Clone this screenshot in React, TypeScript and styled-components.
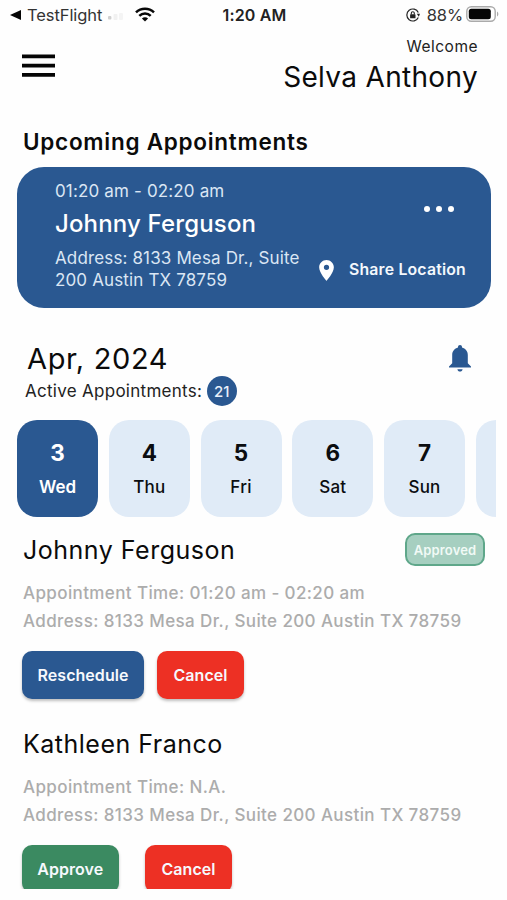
import React from "react";
import styled, { createGlobalStyle } from "styled-components";

const BLUE = "#2a5891";
const RED = "#ed3024";
const GREEN = "#3b8a61";

const GlobalStyle = createGlobalStyle`
  *, *::before, *::after { box-sizing: border-box; }
  body {
    margin: 0;
    background: #fefefe;
    color: #0b0b0b;
    font-family: Inter, Roboto, sans-serif;
  }
  button { font-family: inherit; border: 0; padding: 0; background: none; color: inherit; }
`;

interface TextProps {
  $size: number;
  $line: number;
  $weight?: number;
  $track?: number;
  $color?: string;
}

const Text = styled.div<TextProps>`
  font-size: ${(p) => p.$size}px;
  line-height: ${(p) => p.$line}px;
  font-weight: ${(p) => p.$weight ?? 400};
  letter-spacing: ${(p) => p.$track ?? 0}px;
  color: ${(p) => p.$color ?? "inherit"};
  white-space: pre;
`;

const Screen = styled.main`
  width: 507px;
  height: 900px;
  overflow: hidden;
`;

const Scroll = styled.div`
  height: 889px;
  overflow: hidden;
`;

const StatusBar = styled.div`
  display: grid;
  grid-template-columns: 1fr auto 1fr;
  align-items: center;
  height: 30px;
  padding: 0 8px 0 10px;
`;

const StatusSide = styled.div<{ $end?: boolean }>`
  display: flex;
  align-items: center;
  justify-content: ${(p) => (p.$end ? "flex-end" : "flex-start")};
`;

const BackArrow = styled.svg`
  margin-right: 6px;
`;

const Signal = styled.svg`
  margin: 4px 11px 0 5px;
`;

const WifiIcon = styled.svg`
  margin-top: -2px;
`;

const LockIcon = styled.svg`
  margin-right: 7px;
`;

const BatteryIcon = styled.svg`
  margin: -2px 0 0 3px;
`;

const Header = styled.header`
  display: flex;
  justify-content: space-between;
  height: 98px;
  padding: 7px 29px 0 22px;
`;

const MenuButton = styled.button`
  width: 33px;
  height: 23px;
  margin-top: 17px;
`;

const Greeting = styled.div`
  display: flex;
  flex-direction: column;
  align-items: flex-end;
`;

const SectionTitle = styled.h2`
  margin: 0;
  padding: 0 23px;
  height: 39px;
  font-size: 22.5px;
  line-height: 28px;
  font-weight: 600;
  letter-spacing: 0.73px;
`;

const NextCard = styled.section`
  display: flex;
  width: 474px;
  height: 141px;
  margin-left: 17px;
  padding: 12px 25px 0 38px;
  border-radius: 27px;
  background: ${BLUE};
`;

const CardInfo = styled.div`
  flex: 1;
  display: flex;
  flex-direction: column;
`;

const CardAddress = styled(Text)`
  margin-top: 3px;
`;

const CardActions = styled.div`
  display: flex;
  flex-direction: column;
  align-items: flex-end;
  justify-content: space-between;
  padding: 27px 0 27px;
`;

const MoreButton = styled.button`
  display: flex;
  gap: 5.6px;
  margin-right: 12px;
`;

const Dot = styled.span`
  width: 6.4px;
  height: 6.4px;
  border-radius: 50%;
  background: #fff;
`;

const ShareButton = styled.button`
  display: flex;
  align-items: center;
  gap: 15px;
`;

const MonthBar = styled.div`
  display: flex;
  justify-content: space-between;
  padding: 33px 36px 0 25px;
  height: 112px;
`;

const MonthTitle = styled(Text)`
  padding-left: 2px;
`;

const BellButton = styled.button`
  height: 27px;
  margin-top: 4px;
`;

const ActiveRow = styled.div`
  display: flex;
  align-items: center;
  gap: 4.5px;
`;

const CountBadge = styled.span`
  display: grid;
  place-items: center;
  width: 30px;
  height: 30px;
  border-radius: 50%;
  background: ${BLUE};
  color: #e8f0fa;
  font-size: 15px;
  font-weight: 500;
`;

const Days = styled.div`
  display: flex;
  gap: 10.75px;
  width: 479px;
  margin-left: 17px;
  overflow: hidden;
`;

const Day = styled.button<{ $active?: boolean }>`
  flex: 0 0 81px;
  height: 97px;
  display: flex;
  flex-direction: column;
  align-items: center;
  padding-top: 18px;
  gap: 7px;
  border-radius: 20px;
  background: ${(p) => (p.$active ? BLUE : "#e0ebf7")};
  color: ${(p) => (p.$active ? "#fff" : "#0b0d10")};
`;

const Appointment = styled.article`
  height: 194px;
  padding: 16px 22px 0 23px;
`;

const NameRow = styled.div`
  display: flex;
  align-items: center;
  justify-content: space-between;
  height: 34px;
  margin-bottom: 11.5px;
`;

const StatusTag = styled.span`
  display: grid;
  place-items: center;
  width: 80px;
  height: 33px;
  margin-top: -1px;
  border: 2px solid #5fa78a;
  border-radius: 10px;
  background: #a6cfc0;
  color: #f1faf6;
  font-size: 13px;
  font-weight: 600;
  letter-spacing: 0.15px;
`;

const Buttons = styled.div<{ $gap: number }>`
  display: flex;
  gap: ${(p) => p.$gap}px;
  margin: 16.5px 0 0 -1px;
`;

const ActionButton = styled.button<{ $bg: string; $width: number }>`
  width: ${(p) => p.$width}px;
  height: 48px;
  border-radius: 10px;
  background: ${(p) => p.$bg};
  color: #f6f9fd;
  font-size: 16px;
  font-weight: 600;
  letter-spacing: 0.05px;
  box-shadow: 0 2px 3px rgba(0, 0, 0, 0.25);
`;

const days = [
  ["3", "Wed"],
  ["4", "Thu"],
  ["5", "Fri"],
  ["6", "Sat"],
  ["7", "Sun"],
];

interface Action {
  label: string;
  bg: string;
  width: number;
}

interface Visit {
  name: string;
  time: string;
  approved?: boolean;
  gap: number;
  actions: Action[];
}

const visits: Visit[] = [
  {
    name: "Johnny Ferguson",
    time: "01:20 am - 02:20 am",
    approved: true,
    gap: 13,
    actions: [
      { label: "Reschedule", bg: BLUE, width: 122 },
      { label: "Cancel", bg: RED, width: 87 },
    ],
  },
  {
    name: "Kathleen Franco",
    time: "N.A.",
    gap: 26.5,
    actions: [
      { label: "Approve", bg: GREEN, width: 96.5 },
      { label: "Cancel", bg: RED, width: 87 },
    ],
  },
];

export default function App() {
  return (
    <Screen>
      <GlobalStyle />
      <Scroll>
        <StatusBar>
          <StatusSide>
            <BackArrow width="11" height="10" viewBox="0 0 11 10">
              <path d="M0 5 11 0V10Z" fill="#050505" />
            </BackArrow>
            <Text $size={16.5} $line={30} $track={-0.08} $color="#333">
              TestFlight
            </Text>
            <Signal width="17" height="8" viewBox="0 0 17 8">
              <rect x="1" y="3" width="3.4" height="3.6" rx="1" fill="#d0d0d0" />
              <rect x="6.5" y="1" width="4" height="6" rx="1" fill="#f1f1f1" />
              <rect x="12" y="0" width="4" height="7" rx="1" fill="#f4f4f4" />
            </Signal>
            <WifiIcon width="20" height="15" viewBox="0 0 20 15">
              <g fill="none" stroke="#080808" strokeWidth="2.5">
                <path d="M1 5.4C6 .5 14 .5 19 5.4" />
                <path d="M4.3 8.9c3.2-3.1 8.2-3.1 11.4 0" />
              </g>
              <path d="M10 14.6 6.9 11.5c1.7-1.6 4.5-1.6 6.2 0Z" fill="#080808" />
            </WifiIcon>
          </StatusSide>
          <Text $size={16} $line={30} $weight={600} $track={0.15} $color="#222">
            1:20 AM
          </Text>
          <StatusSide $end>
            <LockIcon width="14" height="14" viewBox="0 0 14 14">
              <path d="M12.3 4.5A6 6 0 1 0 12.3 9.5" fill="none" stroke="#222" strokeWidth="1.2" />
              <path d="M10.8 5.7h3.2L12.8 8.7Z" fill="#222" />
              <rect x="4.1" y="6.3" width="5.4" height="4" rx=".6" fill="#222" />
              <path d="M5.3 6.5V5.2a1.5 1.5 0 0 1 3 0v1.3" fill="none" stroke="#222" strokeWidth="1.1" />
            </LockIcon>
            <Text $size={16.5} $line={30} $track={-0.1} $color="#333">
              88%
            </Text>
            <BatteryIcon width="33" height="16" viewBox="0 0 33 16">
              <rect x=".8" y=".8" width="28.4" height="14.4" rx="4.5" fill="none" stroke="#aaa" strokeWidth="1.4" />
              <rect x="2.8" y="2.8" width="22" height="10.4" rx="2.5" fill="#050505" />
              <path d="M31 5.5c1.8.8 1.8 4.2 0 5Z" fill="#aaa" />
            </BatteryIcon>
          </StatusSide>
        </StatusBar>

        <Header>
          <MenuButton aria-label="Menu">
            <svg width="33" height="23" viewBox="0 0 33 23">
              <path d="M0 2.3H33M0 11.6H33M0 20.9H33" stroke="#050505" strokeWidth="3.7" />
            </svg>
          </MenuButton>
          <Greeting>
            <Text $size={15.5} $line={20} $track={0.5} $color="#222">
              Welcome
            </Text>
            <Text $size={28} $line={41} $track={0.32}>
              Selva Anthony
            </Text>
          </Greeting>
        </Header>

        <SectionTitle>Upcoming Appointments</SectionTitle>
        <NextCard>
          <CardInfo>
            <Text $size={17} $line={25} $track={0.15} $color="#dbe6f4">
              01:20 am - 02:20 am
            </Text>
            <Text $size={24} $line={40} $weight={500} $track={0.16} $color="#fff">
              Johnny Ferguson
            </Text>
            <CardAddress $size={17} $line={22} $track={0.14} $color="#dbe6f4">
              {"Address: 8133 Mesa Dr., Suite\n200 Austin TX 78759"}
            </CardAddress>
          </CardInfo>
          <CardActions>
            <MoreButton aria-label="More">
              <Dot />
              <Dot />
              <Dot />
            </MoreButton>
            <ShareButton>
              <svg width="15" height="21" viewBox="5 2 14 20">
                <path
                  d="M12 2C8.13 2 5 5.13 5 9c0 5.25 7 13 7 13s7-7.75 7-13c0-3.87-3.13-7-7-7zm0 9.5a2.5 2.5 0 0 1 0-5 2.5 2.5 0 0 1 0 5z"
                  fill="#fff"
                />
              </svg>
              <Text $size={15.8} $line={22} $weight={600} $track={0.2} $color="#f4f8fd">
                Share Location
              </Text>
            </ShareButton>
          </CardActions>
        </NextCard>

        <MonthBar>
          <div>
            <MonthTitle $size={29} $line={35} $track={0.65}>
              {"Apr, 2024"}
            </MonthTitle>
            <ActiveRow>
              <Text $size={17} $line={30} $track={0.28} $color="#222">
                Active Appointments:
              </Text>
              <CountBadge>21</CountBadge>
            </ActiveRow>
          </div>
          <BellButton aria-label="Notifications">
            <svg width="22" height="27" viewBox="0 0 22 27">
              <path
                d="M11 0c-1.2 0-2 .8-2 1.9v.7C5.6 3.5 3.2 6.3 3.2 10v8.3L0 21.4v1.2h22v-1.2l-3.2-3.1V10c0-3.7-2.4-6.5-5.8-7.4v-.7C13 .8 12.2 0 11 0ZM8.4 24.2c.2 1.4 1.3 2.3 2.6 2.3s2.4-.9 2.6-2.3Z"
                fill={BLUE}
              />
            </svg>
          </BellButton>
        </MonthBar>

        <Days>
          {days.map(([num, label], i) => (
            <Day key={num} $active={i === 0}>
              <Text $size={22.5} $line={30} $weight={700}>
                {num}
              </Text>
              <Text $size={17} $line={24} $weight={i === 0 ? 600 : 500} $track={i === 0 ? 0 : 0.2}>
                {label}
              </Text>
            </Day>
          ))}
          <Day />
        </Days>

        {visits.map((v) => (
          <Appointment key={v.name}>
            <NameRow>
              <Text $size={25} $line={33} $track={0.5}>
                {v.name}
              </Text>
              {v.approved && <StatusTag>Approved</StatusTag>}
            </NameRow>
            <Text $size={17} $line={28} $weight={500} $track={0.39} $color="#acacac">
              {`Appointment Time: ${v.time}`}
            </Text>
            <Text $size={17} $line={28} $weight={500} $track={0.39} $color="#acacac">
              Address: 8133 Mesa Dr., Suite 200 Austin TX 78759
            </Text>
            <Buttons $gap={v.gap}>
              {v.actions.map((a) => (
                <ActionButton key={a.label} $bg={a.bg} $width={a.width}>
                  {a.label}
                </ActionButton>
              ))}
            </Buttons>
          </Appointment>
        ))}
      </Scroll>
    </Screen>
  );
}
